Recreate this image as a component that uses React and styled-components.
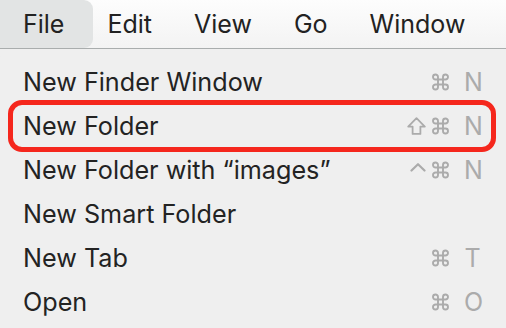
import React from 'react';
import styled, { createGlobalStyle } from 'styled-components';

const Global = createGlobalStyle`
  html, body {
    margin: 0;
    padding: 0;
    background: #efefef;
    overflow: hidden;
  }
  body {
    font-family: Inter, "Liberation Sans", "DejaVu Sans", sans-serif;
    -webkit-font-smoothing: antialiased;
  }
`;

const MenuBar = styled.div`
  height: 48px;
  display: flex;
  align-items: stretch;
  background: linear-gradient(#fdfdfd, #f3f3f3);
  border-bottom: 1px solid #a9adad;
`;

const Title = styled.div`
  display: flex;
  align-items: center;
  padding: 0 ${(p) => (p.$active ? '29px' : '21px')} 0 ${(p) => (p.$active ? '23px' : '21px')};
  margin-right: ${(p) => (p.$active ? '-7px' : '0')};
  font-size: 25px;
  color: #222;
  background: ${(p) => (p.$active ? '#e2e4e4' : 'transparent')};
  border-radius: 0 9px 9px 0;
`;

const Panel = styled.div`
  background: #efefef;
  border-top-left-radius: 8px;
  padding-top: 11px;
`;

const Row = styled.div`
  position: relative;
  height: 44px;
  display: flex;
  align-items: center;
  justify-content: space-between;
  padding: 0 25px 0 23px;
  font-size: 25.2px;
  color: #232323;

  ${(p) =>
    p.$marked &&
    `
    &::after {
      content: '';
      position: absolute;
      left: 8px;
      right: 10px;
      top: -4px;
      bottom: -4px;
      border: 5px solid #f5271d;
      border-radius: 14px;
    }
  `}
`;

const Keys = styled.span`
  display: flex;
  align-items: center;
  gap: 6px;
  color: #ababab;
  font-size: 25px;

  svg {
    display: block;
    fill: none;
    stroke: currentColor;
    stroke-linejoin: round;
    stroke-linecap: round;
  }
`;

const Letter = styled.span`
  margin-left: 9px;
  width: 17px;
  text-align: center;
`;

const Shift = () => (
  <svg width="19" height="18" viewBox="0 0 19 18" strokeWidth="1.8">
    <path d="M9.5 1.2 L17.8 9.6 H13.4 V16.9 H5.6 V9.6 H1.2 Z" />
  </svg>
);

const Cmd = () => (
  <svg width="17" height="18" viewBox="0 0 17 18" strokeWidth="1.9">
    <path d="M11 4 v10 a2.5 2.5 0 1 0 2.5 -2.5 H3.5 a2.5 2.5 0 1 0 2.5 2.5 V4 a2.5 2.5 0 1 0 -2.5 2.5 h10 a2.5 2.5 0 1 0 -2.5 -2.5" />
  </svg>
);

const Ctrl = () => (
  <svg width="16" height="18" viewBox="0 0 16 18" strokeWidth="2.2">
    <polyline points="1.5 9.5 8 3.2 14.5 9.5" />
  </svg>
);

const icons = { shift: Shift, cmd: Cmd, ctrl: Ctrl };

const titles = ['File', 'Edit', 'View', 'Go', 'Window'];

const items = [
  { label: 'New Finder Window', keys: ['cmd'], key: 'N' },
  { label: 'New Folder', keys: ['shift', 'cmd'], key: 'N', marked: true },
  { label: 'New Folder with “images”', keys: ['ctrl', 'cmd'], key: 'N' },
  { label: 'New Smart Folder' },
  { label: 'New Tab', keys: ['cmd'], key: 'T' },
  { label: 'Open', keys: ['cmd'], key: 'O' },
];

export default function App() {
  return (
    <>
      <Global />
      <MenuBar>
        {titles.map((t, i) => (
          <Title key={t} $active={i === 0}>
            {t}
          </Title>
        ))}
      </MenuBar>
      <Panel>
        {items.map((it) => (
          <Row key={it.label} $marked={it.marked}>
            <span>{it.label}</span>
            {it.key && (
              <Keys>
                {it.keys.map((k) => {
                  const Icon = icons[k];
                  return <Icon key={k} />;
                })}
                <Letter>{it.key}</Letter>
              </Keys>
            )}
          </Row>
        ))}
      </Panel>
    </>
  );
}
